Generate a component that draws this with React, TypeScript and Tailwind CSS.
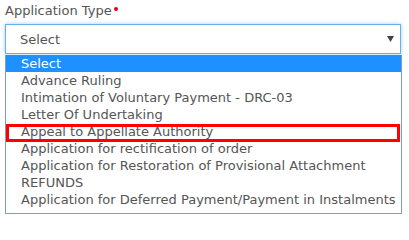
import React from 'react'

const OPTIONS = [
  'Select',
  'Advance Ruling',
  'Intimation of Voluntary Payment - DRC-03',
  'Letter Of Undertaking',
  'Appeal to Appellate Authority',
  'Application for rectification of order',
  'Application for Restoration of Provisional Attachment',
  'REFUNDS',
  'Application for Deferred Payment/Payment in Instalments',
]

export default function App() {
  return (
    <div
      className="w-[409px] h-[215px] bg-white text-[13px] text-[#555] overflow-hidden"
      style={{ fontFamily: '"DejaVu Sans", Verdana, sans-serif' }}
    >
      {/* Label */}
      <div className="mt-[2px] ml-[5px] h-[17px] leading-[17px] flex items-start">
        <span>Application Type</span>
        <span className="mt-[5px] ml-[2px] w-[4px] h-[4px] rounded-full bg-[#e8001c]" />
      </div>

      {/* Select box */}
      <div className="mt-[5px] ml-[5px] w-[396px] h-[30px] border border-[#66afe9] shadow-[0_0_4px_rgba(102,175,233,0.6)] flex items-center justify-between pl-[14px] pr-[6px] leading-[17px]">
        <span>Select</span>
        <svg width="7" height="6" viewBox="0 0 7 6" className="mb-[1px]">
          <polygon points="0,0 7,0 3.5,6" fill="#444" />
        </svg>
      </div>

      {/* Dropdown list */}
      <div className="relative mt-[1px] ml-[5px] w-[397px] h-[159px] border-x border-b border-[#7f9ccf] pb-[4px]">
        {OPTIONS.map((opt, i) => (
          <div
            key={opt}
            className={`h-[17px] leading-[17px] pl-[15px] whitespace-nowrap ${
              i === 0 ? 'bg-[#1e90ff] text-white' : ''
            }`}
          >
            {opt}
          </div>
        ))}
        <div className="absolute left-0 right-[1px] top-[69px] h-[18px] border-[3px] border-[#f00]" />
      </div>
    </div>
  )
}
